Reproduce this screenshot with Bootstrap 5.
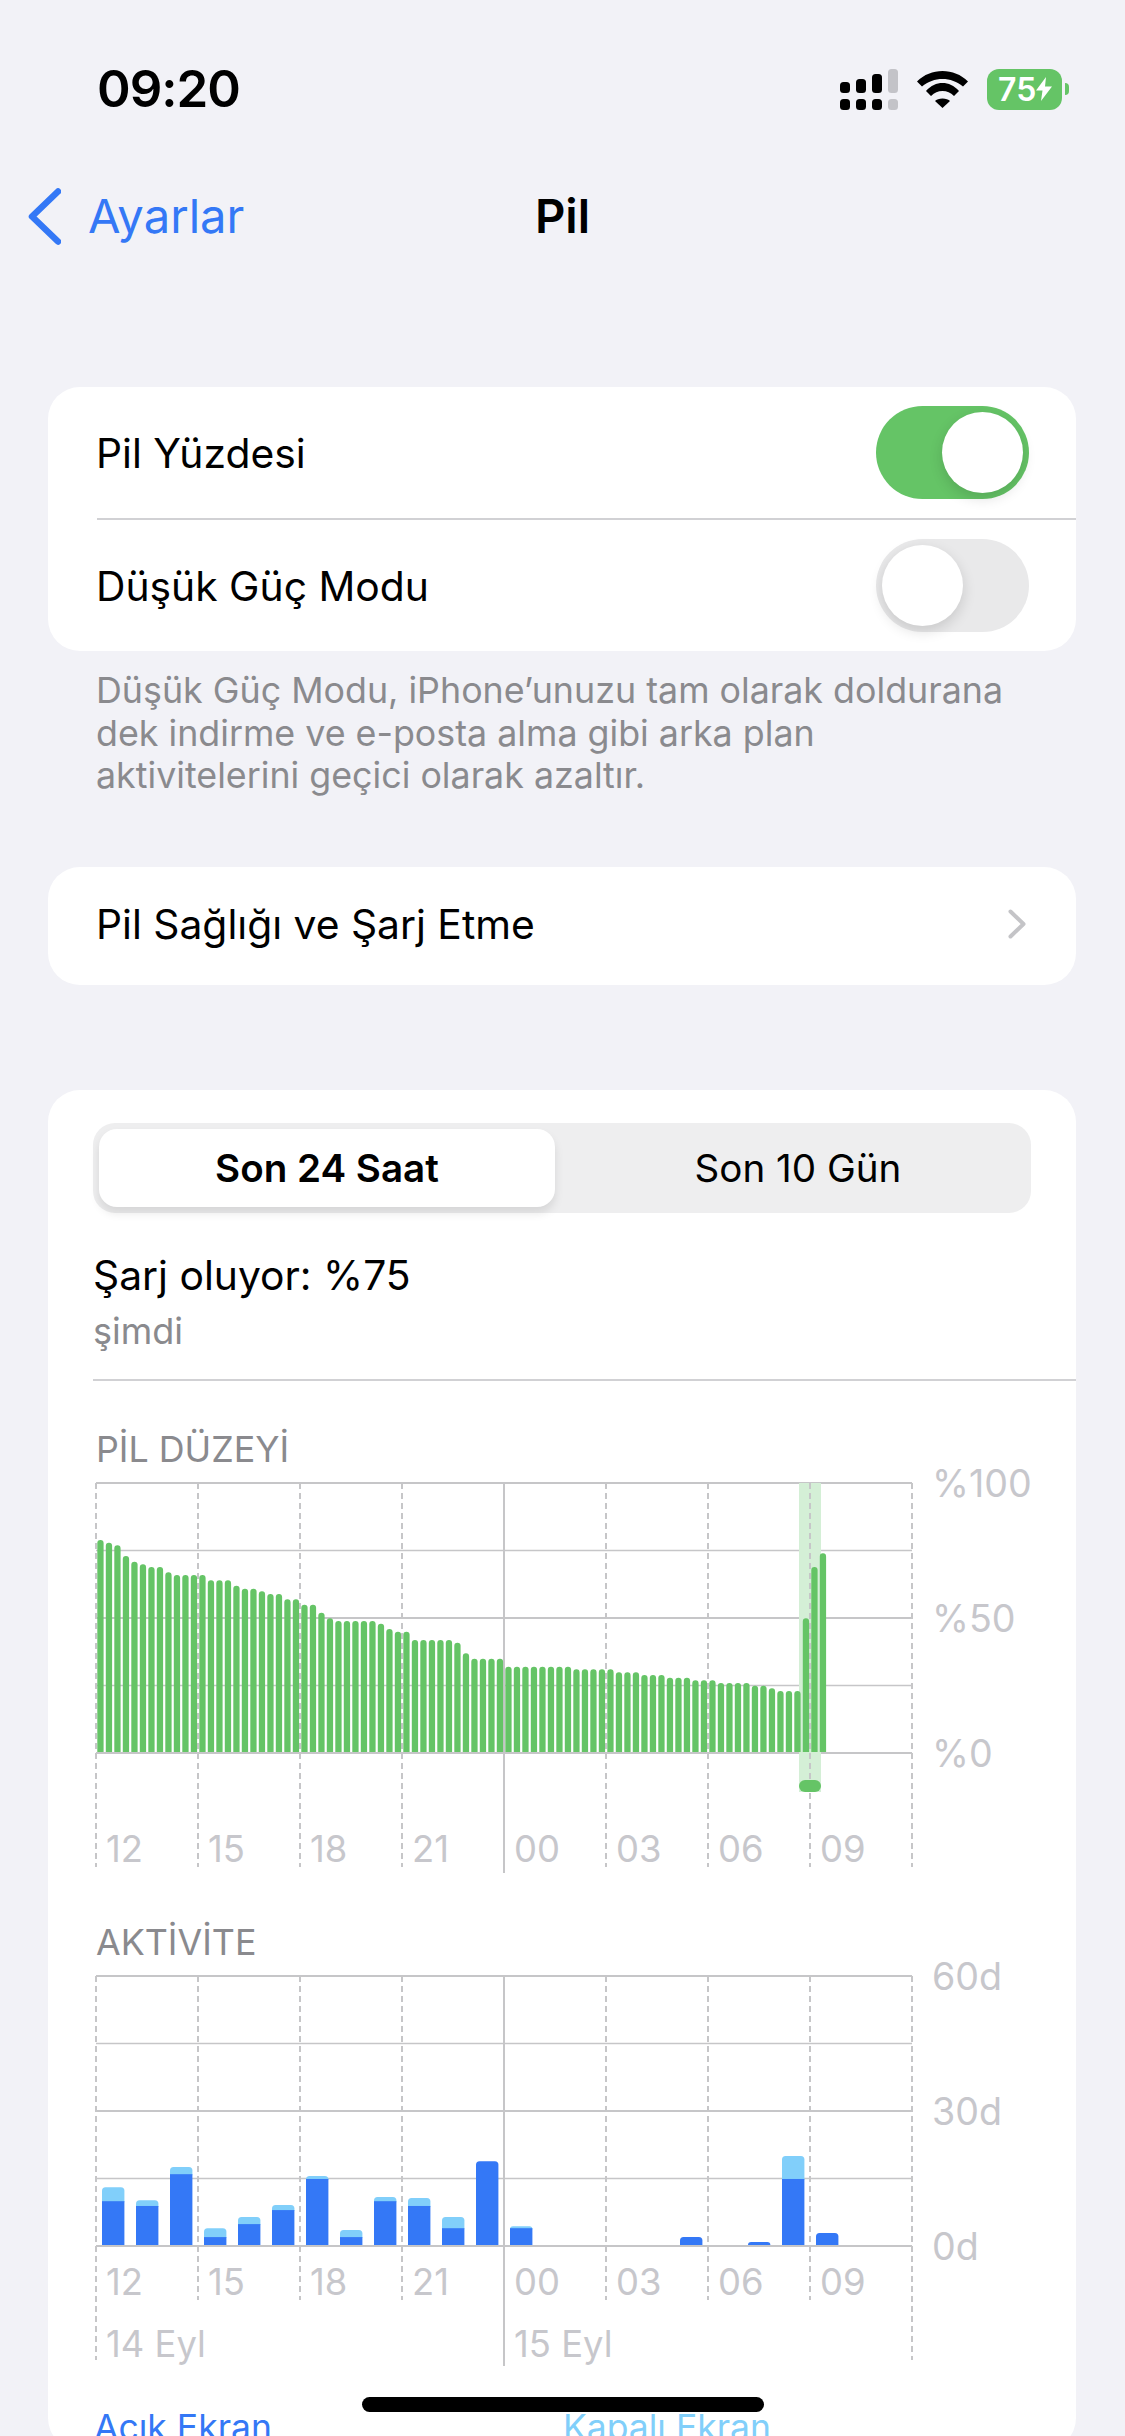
<!DOCTYPE html>
<html lang="tr">
<head>
  <meta charset="UTF-8">
  <title>Pil</title>
  <link href="https://cdn.jsdelivr.net/npm/bootstrap@5.3.2/dist/css/bootstrap.min.css" rel="stylesheet">
  <style>
    html, body { margin: 0; background: #f2f2f7; }
    .phone {
      width: 1125px;
      height: 2436px;
      background: #f2f2f7;
      color: #000;
      font-family: Inter, "Liberation Sans", sans-serif;
      font-size: 40.8px;
      line-height: 48px;
    }
    .status-bar { height: 178px; padding: 0 56px 0 97px; }
    .status-time { font-size: 51px; font-weight: 600; line-height: 60px; letter-spacing: -1px; }
    .status-gap { margin-left: 19px; }
    .batt { width: 75px; height: 41px; border-radius: 12px; background: #65c466; color: #fff; font-size: 32px; line-height: 41px; font-weight: 600; padding-left: 11px; }
    .batt-cap { width: 4px; height: 12px; margin-left: 3px; background: #65c466; border-radius: 0 4px 4px 0; }
    .nav-bar { height: 74px; font-size: 47.2px; line-height: 58px; padding-top: 2px; }
    .nav-side { flex: 1 1 0; }
    .back-link { padding-left: 28px; gap: 27px; color: #3478f6; text-decoration: none; }
    .nav-title { font-weight: 600; }
    .set-card { margin: 0 49px 0 48px; background: #fff; border-radius: 32px; }
    .first-card { margin-top: 135px; }
    .health-card { margin-top: 70px; }
    .chart-card { margin-top: 105px; padding-top: 33px; }
    .set-row { height: 131px; padding: 0 47px 0 48px; }
    .set-row-tall { height: 118px; padding-right: 50px; padding-bottom: 3px; }
    .set-sep { height: 2px; margin-left: 49px; background: #d1d1d4; }
    .set-note { margin: 18px 40px 0 96px; font-size: 35.8px; line-height: 42.5px; color: #8a8a8e; }
    .ios-switch { width: 153px; height: 93px; border-radius: 47px; background: #e9e9ea; padding: 6px; }
    .ios-switch.is-on { background: #65c466; justify-content: flex-end; }
    .ios-knob { width: 81px; height: 81px; border-radius: 50%; background: #fff; box-shadow: 0 5px 14px rgba(0,0,0,.14); }
    .seg-wrap { margin: 0 45px; height: 90px; padding: 6px; background: #eeeeef; border-radius: 22px; }
    .seg-btn { line-height: 78px; font-size: 38.6px; color: #000; text-align: center; border-radius: 18px; }
    .seg-btn.is-active { flex: 0 0 456px; background: #fff; font-weight: 600; box-shadow: 0 6px 10px rgba(0,0,0,.1); }
    .seg-btn.is-idle { flex: 1 1 0; padding-left: 16px; }
    .charge-box { padding: 38px 45px 0; height: 166px; }
    .charge-title { line-height: 48px; }
    .charge-sub { margin-top: 8px; font-size: 36px; line-height: 48px; color: #8a8a8e; }
    .chart-sep { height: 2px; margin-left: 45px; background: #d1d1d4; }
    .chart-title { padding-left: 48px; font-size: 35.8px; line-height: 16px; color: #8a8a8e; }
    .pil-title { margin-top: 60px; margin-bottom: 1px; }
    .act-title { margin-top: 59px; }
    .chart-svg { display: block; width: 1028px; }
    .chart-svg text { font-family: Inter, "Liberation Sans", sans-serif; font-size: 36.4px; fill: #c7c7cc; }
    .chart-svg text.y-label { font-size: 37.6px; }
    .legend { margin-top: 31px; padding-left: 46px; font-size: 35.5px; line-height: 44px; color: #3478f6; }
    .legend-off { margin-left: 291px; color: #81cffa; }
    .home-bar { left: 362px; bottom: 24px; width: 402px; height: 15px; border-radius: 8px; background: #000; }
  </style>
</head>
<body>
  <div class="phone position-relative overflow-hidden">

    <div class="status-bar d-flex align-items-center justify-content-between">
      <div class="status-time">09:20</div>
      <div class="d-flex align-items-center">
        <svg width="58" height="41" viewBox="0 0 58 41" fill="#000">
          <rect x="0" y="13" width="10" height="11" rx="3.5"/>
          <rect x="16" y="10" width="10" height="14" rx="3.5"/>
          <rect x="32" y="5" width="10" height="19" rx="3.5"/>
          <rect x="48" y="0" width="10" height="24" rx="3.5" fill="#c3c3c8"/>
          <rect x="0" y="30" width="10" height="11" rx="3.5"/>
          <rect x="16" y="30" width="10" height="11" rx="3.5"/>
          <rect x="32" y="30" width="10" height="11" rx="3.5"/>
          <rect x="48" y="30" width="10" height="11" rx="3.5" fill="#c3c3c8"/>
        </svg>
        <svg class="status-gap" width="51" height="37" viewBox="0 0 51 37" fill="#000">
          <path d="M0 10.5C7 3.5 16 0 25.5 0C35 0 44 3.5 51 10.5L46 15.5C40 10.5 33 8 25.5 8C18 8 11 10.5 5 15.5Z"/>
          <path d="M9 20C14 14.5 19.5 12 25.5 12C31.5 12 37 14.5 42 20L37 25C33.5 21.5 30 20 25.5 20C21 20 17.5 21.5 14 25Z"/>
          <path d="M18 30C20.5 26.5 30.5 26.5 33 30L25.5 37Z"/>
        </svg>
        <div class="batt status-gap d-flex align-items-center">
          <span>75</span>
          <svg width="16" height="24" viewBox="0 0 16 24" fill="#fff"><path d="M10 0L0 13.5H6.5L5 24L16 9.5H9Z"/></svg>
        </div>
        <div class="batt-cap"></div>
      </div>
    </div>

    <div class="nav-bar d-flex align-items-center">
      <div class="nav-side d-flex">
        <a class="back-link d-flex align-items-center" href="#">
          <svg width="33" height="57" viewBox="0 0 33 57" fill="none" stroke="#3478f6" stroke-width="6.5" stroke-linecap="round" stroke-linejoin="round"><path d="M30 3.5L4 28.5L30 53.5"/></svg>
          <span>Ayarlar</span>
        </a>
      </div>
      <div class="nav-title">Pil</div>
      <div class="nav-side"></div>
    </div>

    <div class="set-card first-card">
      <div class="set-row d-flex align-items-center justify-content-between">
        <span>Pil Yüzdesi</span>
        <div class="ios-switch is-on d-flex"><div class="ios-knob"></div></div>
      </div>
      <div class="set-sep"></div>
      <div class="set-row d-flex align-items-center justify-content-between">
        <span>Düşük Güç Modu</span>
        <div class="ios-switch d-flex"><div class="ios-knob"></div></div>
      </div>
    </div>
    <div class="set-note">Düşük Güç Modu, iPhone’unuzu tam olarak doldurana<br>dek indirme ve e-posta alma gibi arka plan<br>aktivitelerini geçici olarak azaltır.</div>

    <div class="set-card health-card">
      <div class="set-row set-row-tall d-flex align-items-center justify-content-between">
        <span>Pil Sağlığı ve Şarj Etme</span>
        <svg width="18" height="30" viewBox="0 0 18 30" fill="none" stroke="#c4c4c7" stroke-width="4" stroke-linecap="round" stroke-linejoin="round"><path d="M2.5 2.5L15.5 15L2.5 27.5"/></svg>
      </div>
    </div>

    <div class="set-card chart-card">
      <div class="seg-wrap d-flex">
        <div class="seg-btn is-active">Son 24 Saat</div>
        <div class="seg-btn is-idle">Son 10 Gün</div>
      </div>
      <div class="charge-box">
        <div class="charge-title">Şarj oluyor: %75</div>
        <div class="charge-sub">şimdi</div>
      </div>
      <div class="chart-sep"></div>

      <div class="chart-title pil-title">PİL DÜZEYİ</div>
      <svg class="chart-svg" id="levelChart" height="417" viewBox="48 1458 1028 417"></svg>

      <div class="chart-title act-title">AKTİVİTE</div>
      <svg class="chart-svg" id="activityChart" height="425" viewBox="48 1950 1028 425"></svg>

      <div class="legend d-flex">
        <span>Açık Ekran</span>
        <span class="legend-off">Kapalı Ekran</span>
      </div>
    </div>

    <div class="home-bar position-absolute"></div>
  </div>

  <script src="https://cdn.jsdelivr.net/npm/bootstrap@5.3.2/dist/js/bootstrap.bundle.min.js"></script>
  <script>
    const GRID = '#c6c6c8';
    const HOURS = ['12', '15', '18', '21', '00', '03', '06', '09'];

    // top of each bar, read off the screenshot in 3x zoom pixels
    const levelTops = [330,338,346,378,395,403,411,411,427,435,435,435,435,451,451,451,467,476,476,484,492,492,508,508,524,524,548,565,573,573,573,573,573,581,597,605,605,630,630,630,630,630,638,670,686,686,686,686,710,710,710,710,710,710,710,
      710,718,718,718,718,718,727,727,727,735,735,735,743,743,743,751,751,751,759,759,759,759,767,767,775,783,783,783,565,411,370];

    // index (one per hour), light top, dark top
    const activity = [[0,840,881],[1,878,895],[2,781,802],[3,960,986],[4,927,948],[5,892,907],[6,807,816],[7,965,986],[8,869,881],[9,872,895],[10,927,960],[11,764,764],[12,954,960],[17,986,986],[19,1000,1000],[20,749,816],[21,974,974]];

    function line(x1, y1, x2, y2, w, dash) {
      return `<line x1="${x1}" y1="${y1}" x2="${x2}" y2="${y2}" stroke="${GRID}" stroke-width="${w}"${dash ? ' stroke-dasharray="6 4"' : ''}/>`;
    }
    function label(x, y, t, cls) {
      return `<text x="${x}" y="${y}"${cls ? ` class="${cls}"` : ''}>${t}</text>`;
    }
    function topBar(x, w, top, base, r, fill) {
      r = Math.min(r, base - top);
      return `<path fill="${fill}" d="M${x} ${base}V${top + r}Q${x} ${top} ${x + r} ${top}H${x + w - r}Q${x + w} ${top} ${x + w} ${top + r}V${base}Z"/>`;
    }
    function verticals(top, end, tall, dateEnd) {
      let s = '';
      for (let i = 0; i <= 8; i++) {
        const x = 96 + i * 102;
        if (i === 4) s += line(x, top, x, dateEnd + 6, 2);
        else s += line(x, top, x, (i === 0 || i === 8) ? tall : end, 2, true);
      }
      return s;
    }

    // pil düzeyi
    let lv = '';
    [[1483, 2], [1550.5, 1.5], [1618, 2], [1685.5, 1.5], [1753, 2]].forEach(g => { lv += line(96, g[0], 912, g[0], g[1]); });
    lv += '<rect x="799" y="1483" width="22" height="309" fill="#d4efd6"/>';
    lv += verticals(1483, 1867, 1867, 1867);
    lv += '<rect x="799" y="1780" width="22" height="12" rx="6" fill="#65c466"/>';
    levelTops.forEach((t, i) => {
      lv += topBar(97.3 + i * 8.5, 6.3, 1430 + t / 3, 1752, 3.1, '#65c466');
    });
    lv += label(932, 1497, '%100', 'y-label') + label(932, 1632, '%50', 'y-label') + label(932, 1767, '%0', 'y-label');
    HOURS.forEach((h, i) => { lv += label(106 + i * 102, 1862, h); });
    document.getElementById('levelChart').innerHTML = lv;

    // aktivite
    let ac = '';
    [[1976, 2], [2043.5, 1.5], [2111, 2], [2178.5, 1.5], [2246, 2]].forEach(g => { ac += line(96, g[0], 912, g[0], g[1]); });
    ac += verticals(1976, 2300, 2360, 2360);
    activity.forEach(b => {
      const x = 102 + b[0] * 34;
      const lightTop = 1900 + b[1] / 2.925, darkTop = 1900 + b[2] / 2.925;
      if (b[1] !== b[2]) {
        ac += topBar(x, 22.4, lightTop, darkTop + 1, 3.5, '#81cffa');
        ac += `<rect x="${x}" y="${darkTop}" width="22.4" height="${2245 - darkTop}" fill="#3478f6"/>`;
      } else {
        ac += topBar(x, 22.4, darkTop, 2245, 3.5, '#3478f6');
      }
    });
    ac += label(932, 1990, '60d', 'y-label') + label(932, 2125, '30d', 'y-label') + label(932, 2260, '0d', 'y-label');
    HOURS.forEach((h, i) => { ac += label(106 + i * 102, 2295, h); });
    ac += label(106, 2357, '14 Eyl') + label(514, 2357, '15 Eyl');
    document.getElementById('activityChart').innerHTML = ac;
  </script>
</body>
</html>
